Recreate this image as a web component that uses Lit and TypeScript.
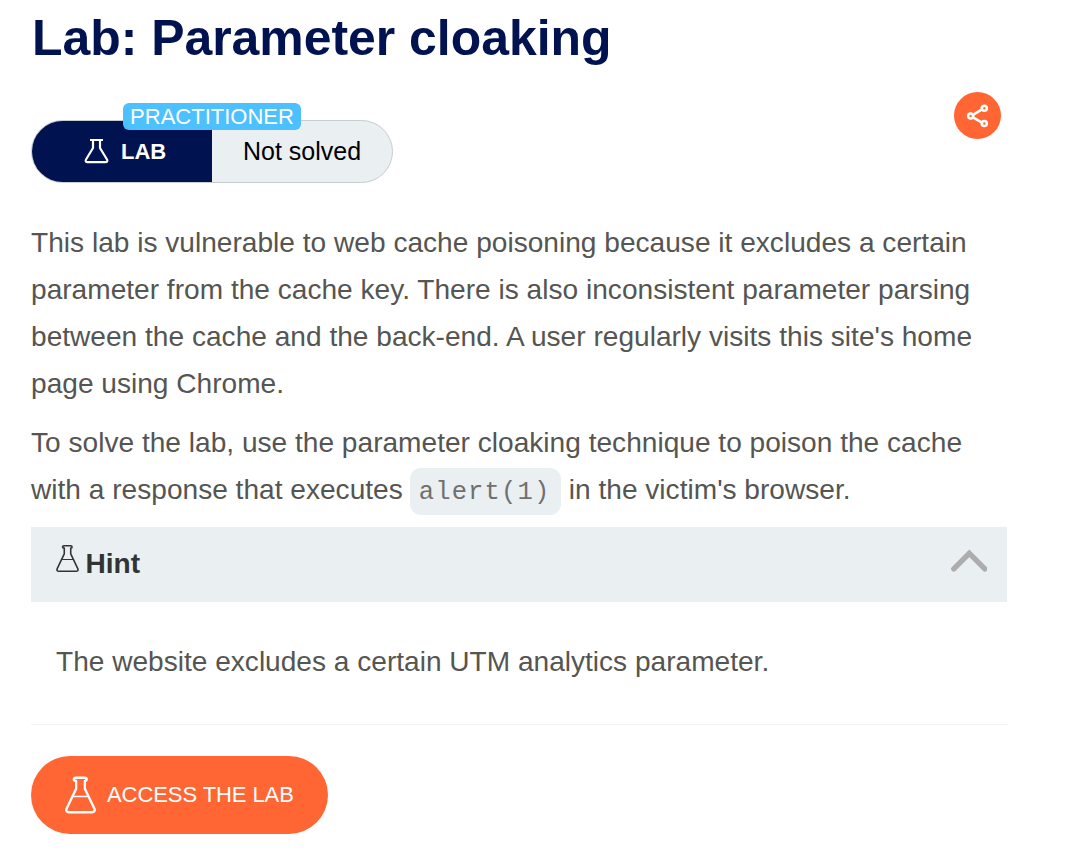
import { LitElement, html, css, svg } from "lit";
import { customElement } from "lit/decorators.js";

@customElement("app-root")
export class AppRoot extends LitElement {
  static styles = css`
    :host { display: block; width: 1070px; height: 856px; overflow: hidden; background: #fff;
      font-family: "Liberation Sans", Arial, sans-serif; color: #555552; }
    * { box-sizing: border-box; }
    svg { display: block; flex: none; }
    .page { margin: 0 63px 0 31px; width: 976px; }
    h1 { margin: 0; padding: 8px 0 0 1px; font-size: 49.92px; line-height: 60px; color: #00124f; letter-spacing: -0.01px; white-space: nowrap; }
    .bar { display: flex; justify-content: space-between; margin-top: 24px; height: 91px; padding-right: 6px; }
    .status { position: relative; display: flex; margin-top: 28px; width: 362px; height: 63px;
      border: 1px solid #c6cccf; border-radius: 32px; background: #eaeff2; }
    .kind { display: flex; align-items: center; width: 180px; background: #00124f; color: #fff; border-radius: 31px 0 0 31px;
      font-size: 22px; font-weight: 700; padding-left: 52px; gap: 12px; }
    .kind svg { margin-bottom: 2px; }
    .state { flex: 1; padding-left: 31px; line-height: 61px; font-size: 25px; color: #000; white-space: nowrap; }
    .level { position: absolute; left: 91px; top: -18px; width: 178px; height: 27px; border-radius: 6px; background: #4dc0ff;
      color: #fff; font-size: 22px; line-height: 27px; text-align: center; white-space: nowrap; }
    .share { display: grid; place-items: center; width: 47px; height: 47px; border-radius: 50%; background: #ff6633; }
    p { margin: 0; font-size: 28.08px; line-height: 47px; white-space: nowrap; }
    .intro { margin-top: 36px; letter-spacing: 0.01px; }
    .task { margin-top: 12px; letter-spacing: 0.01px; }
    code { display: inline-block; height: 47px; width: 151px; border-radius: 11px; background: #eaeff2; padding-left: 9px; color: #70706e;
      font-family: "Liberation Mono", "Courier New", monospace; font-size: 25.5px; letter-spacing: 1.15px; line-height: 49px; }
    .code-line { display: flex; gap: 8px; height: 47px; }
    .code-line code { margin: 2px 0 0 -1px; }
    .hint { display: flex; justify-content: space-between; margin-top: 14px; height: 75px; background: #eaeff2; padding: 17px 20px 0 24.500px; }
    .label { display: flex; gap: 7px; color: #333332; font-size: 28.08px; font-weight: 700; line-height: 39px; }
    .chev { margin-top: 4px; }
    .answer { padding: 36px 25px 39px; border-bottom: 1px solid #f3f3f3; margin-right: -1px; }
    .go { display: flex; align-items: center; margin-top: 31px; width: 297px; height: 78px; border: 0; border-radius: 39px; background: #ff6633;
      color: #fff; font: 22px "Liberation Sans", Arial, sans-serif; padding: 0 0 0 33.500px; gap: 11.500px; white-space: nowrap; letter-spacing: -0.08px; }
  `;

  private flask(w: number, h: number, stroke: number, liquid: number) {
    return html`<svg width=${w} height=${h} viewBox="0 0 32 38" fill="none" stroke="currentColor" stroke-width=${stroke} stroke-linejoin="round" stroke-linecap="round">
      <path d="M11 4.5C8.500 4.500 8.500 1.200 11 1.200H20.500C23 1.200 23 4.500 20.500 4.500M11.500 4.500V12.500L1.700 33C.7 35.300 1.700 36.800 4 36.800H28C30.300 36.800 31.300 35.300 30.300 33L20.500 12.500V4.500" />
      ${svg`<path d="M9 20.500H23.500" stroke-width=${liquid} />`}
    </svg>`;
  }

  render() {
    return html`<main class="page">
      <h1>Lab: Parameter cloaking</h1>
      <div class="bar">
        <div class="status">
          <div class="kind">
            <svg width="25" height="26" viewBox="0 0 25 26" fill="none" stroke="currentColor" stroke-width="2.200" stroke-linejoin="round"><path d="M6 2H19M9 2V10L2 21.500C1.200 23.200 1.900 24.200 3.500 24.200H21.500C23.100 24.200 23.800 23.200 23 21.500L16 10V2" /></svg>
            <span>LAB</span>
          </div>
          <div class="state"><span>Not solved</span></div>
          <span class="level">PRACTITIONER</span>
        </div>
        <div class="share">
          <svg width="23" height="24" viewBox="0 0 23 24" fill="none" stroke="#fff" stroke-width="2.600"><path d="M7 10.800L15.500 5.700M7 13.300L15.500 18.400" /><circle cx="4.600" cy="12" r="2.500" /><circle cx="18.300" cy="4.300" r="2.500" /><circle cx="18.300" cy="19.500" r="2.500" /></svg>
        </div>
      </div>
      <p class="intro"><span>This lab is vulnerable to web cache poisoning because it excludes a certain</span><br /><span>parameter from the cache key. There is also inconsistent parameter parsing</span><br /><span>between the cache and the back-end. A user regularly visits this site's home</span><br /><span>page using Chrome.</span></p>
      <p class="task"><span>To solve the lab, use the parameter cloaking technique to poison the cache</span><span class="code-line"><span>with a response that executes</span><code>alert(1)</code><span>in the victim's browser.</span></span></p>
      <section class="hint">
        <div class="label">${this.flask(23, 29, 2.2, 1.5)}<span>Hint</span></div>
        <svg class="chev" width="37" height="24" viewBox="0 0 37 24" fill="none" stroke="#adadad" stroke-width="5.400"><path d="M3.800 20.800L19.300 5.300L34.800 20.800" stroke-linecap="round" /></svg>
      </section>
      <p class="answer"><span>The website excludes a certain UTM analytics parameter.</span></p>
      <button class="go">${this.flask(31, 38, 2.4, 1.5)}<span>ACCESS THE LAB</span></button>
    </main>`;
  }
}
